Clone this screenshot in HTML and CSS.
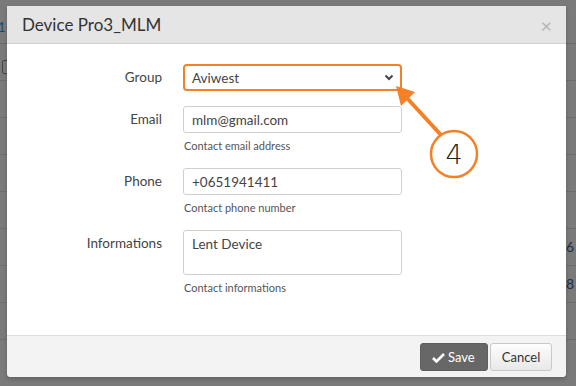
FILE: index.html
```html
<!DOCTYPE html>
<html>
<head>
<meta charset="utf-8">
<link rel="stylesheet" href="styles.css">
</head>
<body>
<div class="page">
  <div class="row row-first"><span class="link">1-</span></div>
  <div class="row"><span class="box"></span></div>
  <div class="row"></div>
  <div class="row"></div>
  <div class="row"></div>
  <div class="row"></div>
  <div class="row"><span class="num">6</span></div>
  <div class="row"><span class="num">8</span></div>
  <div class="row"></div>
</div>

<div class="modal">
  <div class="modal-header">
    <h4 class="title">Device Pro3_MLM</h4>
    <span class="close">&times;</span>
  </div>
  <div class="modal-body">
    <div class="field">
      <label class="label">Group</label>
      <div class="control">
        <div class="select">
          <span>Aviwest</span>
          <svg class="chev" width="10" height="7" viewBox="0 0 10 7"><path d="M1.5 1.5 L5 5 L8.5 1.5" fill="none" stroke="#444" stroke-width="2"/></svg>
        </div>
      </div>
    </div>
    <div class="field">
      <label class="label">Email</label>
      <div class="control">
        <div class="input">mlm@gmail.com</div>
        <div class="help">Contact email address</div>
      </div>
    </div>
    <div class="field">
      <label class="label">Phone</label>
      <div class="control">
        <div class="input">+0651941411</div>
        <div class="help">Contact phone number</div>
      </div>
    </div>
    <div class="field">
      <label class="label">Informations</label>
      <div class="control">
        <div class="input textarea">Lent Device</div>
        <div class="help">Contact informations</div>
      </div>
    </div>
  </div>
  <div class="modal-footer">
    <button class="btn btn-save"><svg width="13" height="11" viewBox="0 0 13 11"><path d="M1 6 L4.5 9.5 L12 2" fill="none" stroke="#fff" stroke-width="2.6"/></svg>Save</button>
    <button class="btn btn-cancel">Cancel</button>
  </div>
</div>

<svg class="annot" width="576" height="386" viewBox="0 0 576 386">
  <line x1="441" y1="135" x2="406" y2="97" stroke="#f58025" stroke-width="4"/>
  <polygon points="396,86 415,92 401,106" fill="#f58025"/>
  <circle cx="454" cy="154" r="23" fill="#fff" stroke="#f58025" stroke-width="2.5"/>
  <text x="454" y="164" text-anchor="middle" class="annot-num">4</text>
</svg>
</body>
</html>
```
FILE: styles.css
```css
html, body {
  margin: 0;
  padding: 0;
}
body {
  width: 576px;
  height: 386px;
  overflow: hidden;
  background: #7a7a7a;
  font-family: Lato, "Open Sans", sans-serif;
  position: relative;
}
.page {
  padding-top: 7px;
}
.row {
  height: 36px;
  border-bottom: 1px solid #6c6c6c;
  position: relative;
}
.link {
  position: absolute;
  left: -2px;
  top: 12px;
  color: #1e4a66;
  font-size: 13px;
}
.box {
  position: absolute;
  left: 2px;
  top: 16px;
  width: 10px;
  height: 12px;
  border: 1px solid #444;
  border-radius: 2px;
}
.num {
  position: absolute;
  right: 2px;
  top: 9px;
  color: #1c2e44;
  font-size: 14px;
}
.modal {
  position: absolute;
  left: 7px;
  top: 6px;
  width: 559px;
  height: 371px;
  background: #fff;
  border-radius: 0 0 4px 4px;
  overflow: hidden;
  display: flex;
  flex-direction: column;
  box-shadow: 0 2px 4px rgba(0,0,0,0.2);
}
.modal-header {
  height: 37px;
  background: #e5e5e5;
  border-bottom: 1px solid #d0d0d0;
  display: flex;
  align-items: center;
  justify-content: space-between;
  padding: 0 14px 0 15px;
}
.title {
  margin: 0;
  font-weight: 400;
  font-size: 17px;
  color: #333;
}
.close {
  color: #b5b5b5;
  font-size: 20px;
  line-height: 1;
  margin-top: 1px;
}
.modal-body {
  flex: 1;
  padding: 20px 15px 0 15px;
  display: flex;
  flex-direction: column;
  gap: 15px;
}
.field {
  display: grid;
  grid-template-columns: 140px 219px;
  column-gap: 21px;
}
.label {
  text-align: right;
  font-size: 13.5px;
  color: #444;
  padding-top: 6px;
  line-height: 15px;
}
.control {
  display: flex;
  flex-direction: column;
}
.input, .select {
  height: 27px;
  box-sizing: border-box;
  border: 1px solid #cfcfcf;
  border-radius: 3px;
  padding: 0 8px;
  font-size: 13.5px;
  color: #444;
  display: flex;
  align-items: center;
}
.select {
  border: 2px solid #f58025;
  border-radius: 4px;
  padding: 0 6px 0 7px;
  justify-content: space-between;
}
.chev {
  display: block;
}
.textarea {
  height: 45px;
  align-items: flex-start;
  padding-top: 5px;
}
.help {
  font-size: 11px;
  color: #555;
  margin-top: 5px;
  line-height: 15px;
  padding-left: 1px;
}
.modal-footer {
  height: 42px;
  box-sizing: border-box;
  background: #f3f3f3;
  border-top: 1px solid #ddd;
  display: flex;
  justify-content: flex-end;
  align-items: flex-start;
  gap: 2px;
  padding: 7px 14px 0 0;
}
.btn {
  height: 28px;
  box-sizing: border-box;
  border-radius: 3px;
  font-family: Lato, "Open Sans", sans-serif;
  font-size: 13px;
  display: flex;
  align-items: center;
  gap: 3px;
  cursor: pointer;
}
.btn-save {
  width: 68px;
  background: #676767;
  color: #fff;
  border: 1px solid #5e5e5e;
  padding: 0 0 0 11px;
}
.btn-cancel {
  width: 62px;
  background: linear-gradient(#fdfdfd, #e8e8e8);
  border: 1px solid #c9c9c9;
  color: #333;
  justify-content: center;
}
.annot {
  position: absolute;
  left: 0;
  top: 0;
}
.annot-num {
  font-family: "DejaVu Sans", sans-serif;
  font-weight: 200;
  font-size: 27px;
  fill: #222;
}
```
